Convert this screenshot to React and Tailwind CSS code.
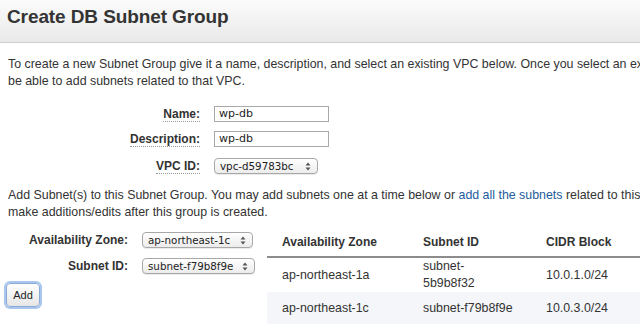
import React from 'react'

const font = { fontFamily: '"Liberation Sans", Arial, sans-serif' }
const ctrlFont = { fontFamily: '"DejaVu Sans", "Liberation Sans", sans-serif' }

function Arrows() {
  return (
    <svg width="6" height="9" viewBox="0 0 6 9" className="shrink-0">
      <path d="M3 0.5 L5.5 3.5 L0.5 3.5 Z" fill="#555" />
      <path d="M3 8.5 L5.5 5.5 L0.5 5.5 Z" fill="#555" />
    </svg>
  )
}

function Select({ value, width }) {
  return (
    <div
      className="h-[16px] flex items-center justify-between pl-[5px] pr-[6px] rounded-[4px] border border-[#a8a8a8] bg-gradient-to-b from-white to-[#ececec] text-[10.3px] text-[#222] shadow-[0_1px_0_rgba(0,0,0,0.08)]"
      style={{ ...ctrlFont, width }}
    >
      <span>{value}</span>
      <Arrows />
    </div>
  )
}

function Label({ children }) {
  return (
    <span className="font-bold text-[12px] text-[#333] border-b border-dotted border-[#999] leading-[14px]">
      {children}
    </span>
  )
}

function Input({ value }) {
  return (
    <div className="w-[115px] h-[16px] border border-[#a9a9a9] bg-white text-[11px] leading-[14px] pl-[4px] text-[#222]" style={ctrlFont}>
      {value}
    </div>
  )
}

export default function App() {
  return (
    <div className="w-[640px] h-[326px] overflow-hidden bg-white text-[#333]" style={font}>
      <div className="h-[43px] border-b border-[#cfcfcf] bg-gradient-to-b from-[#fbfbfb] to-[#e9e9e9] flex items-start pt-[4px] px-[7px]">
        <h1 className="text-[19px] leading-[26px] font-bold text-[#333] tracking-[-0.1px]">Create DB Subnet Group</h1>
      </div>

      <div className="pl-[8px] pt-[13px] text-[12.4px] leading-[17px] whitespace-nowrap">
        <p>To create a new Subnet Group give it a name, description, and select an existing VPC below. Once you select an existing VPC, you will</p>
        <p>be able to add subnets related to that VPC.</p>
      </div>

      <div className="mt-[16px] grid grid-cols-[200px_auto] gap-x-[14px] gap-y-[9px] items-center text-[12px] leading-[16px]">
        <div className="text-right"><Label>Name:</Label></div>
        <Input value="wp-db" />
        <div className="text-right"><Label>Description:</Label></div>
        <Input value="wp-db" />
        <div className="text-right mt-[2px]"><Label>VPC ID:</Label></div>
        <div className="mt-[2px]"><Select value="vpc-d59783bc" width="104px" /></div>
      </div>

      <div className="pl-[8px] pt-[13px] text-[12.4px] leading-[17px] whitespace-nowrap">
        <p>
          Add Subnet(s) to this Subnet Group. You may add subnets one at a time below or{' '}
          <span className="text-[#1d5b9b]">add all the subnets</span> related to this VPC. You can also
        </p>
        <p>make additions/edits after this group is created.</p>
      </div>

      <div className="flex mt-[6px]">
        <div className="w-[267px] shrink-0 pt-[5px]">
          <div className="grid grid-cols-[128px_auto] gap-x-[14px] gap-y-[10px] items-center text-[12px] leading-[16px]">
            <div className="text-right font-bold">Availability Zone:</div>
            <Select value="ap-northeast-1c" width="111px" />
            <div className="text-right font-bold">Subnet ID:</div>
            <Select value="subnet-f79b8f9e" width="113px" />
          </div>
          <div className="pl-[6px] mt-[9px]">
            <button className="block w-[34px] h-[24px] rounded-[4px] border border-[#8aa9d6] bg-gradient-to-b from-white to-[#e6e6e6] text-[11px] leading-[14px] text-[#222] shadow-[0_0_0_2px_#a9c7ee]">
              Add
            </button>
          </div>
        </div>

        <table className="w-[400px] shrink-0 text-[12.4px] border-collapse">
          <thead>
            <tr className="border-b-2 border-[#8c8c8c] text-left">
              <th className="pl-[15px] w-[156px] h-[30px] pt-[1px] font-bold text-[12px]">Availability Zone</th>
              <th className="w-[123px] font-bold text-[12px] pt-[1px]">Subnet ID</th>
              <th className="font-bold text-[12px] pt-[1px]">CIDR Block</th>
            </tr>
          </thead>
          <tbody>
            <tr className="h-[35px]">
              <td className="pl-[15px]">ap-northeast-1a</td>
              <td className="leading-[17px]">subnet-<br />5b9b8f32</td>
              <td>10.0.1.0/24</td>
            </tr>
            <tr className="h-[32px] bg-[#f4f6f9]">
              <td className="pl-[15px]">ap-northeast-1c</td>
              <td>subnet-f79b8f9e</td>
              <td>10.0.3.0/24</td>
            </tr>
          </tbody>
        </table>
      </div>
    </div>
  )
}
